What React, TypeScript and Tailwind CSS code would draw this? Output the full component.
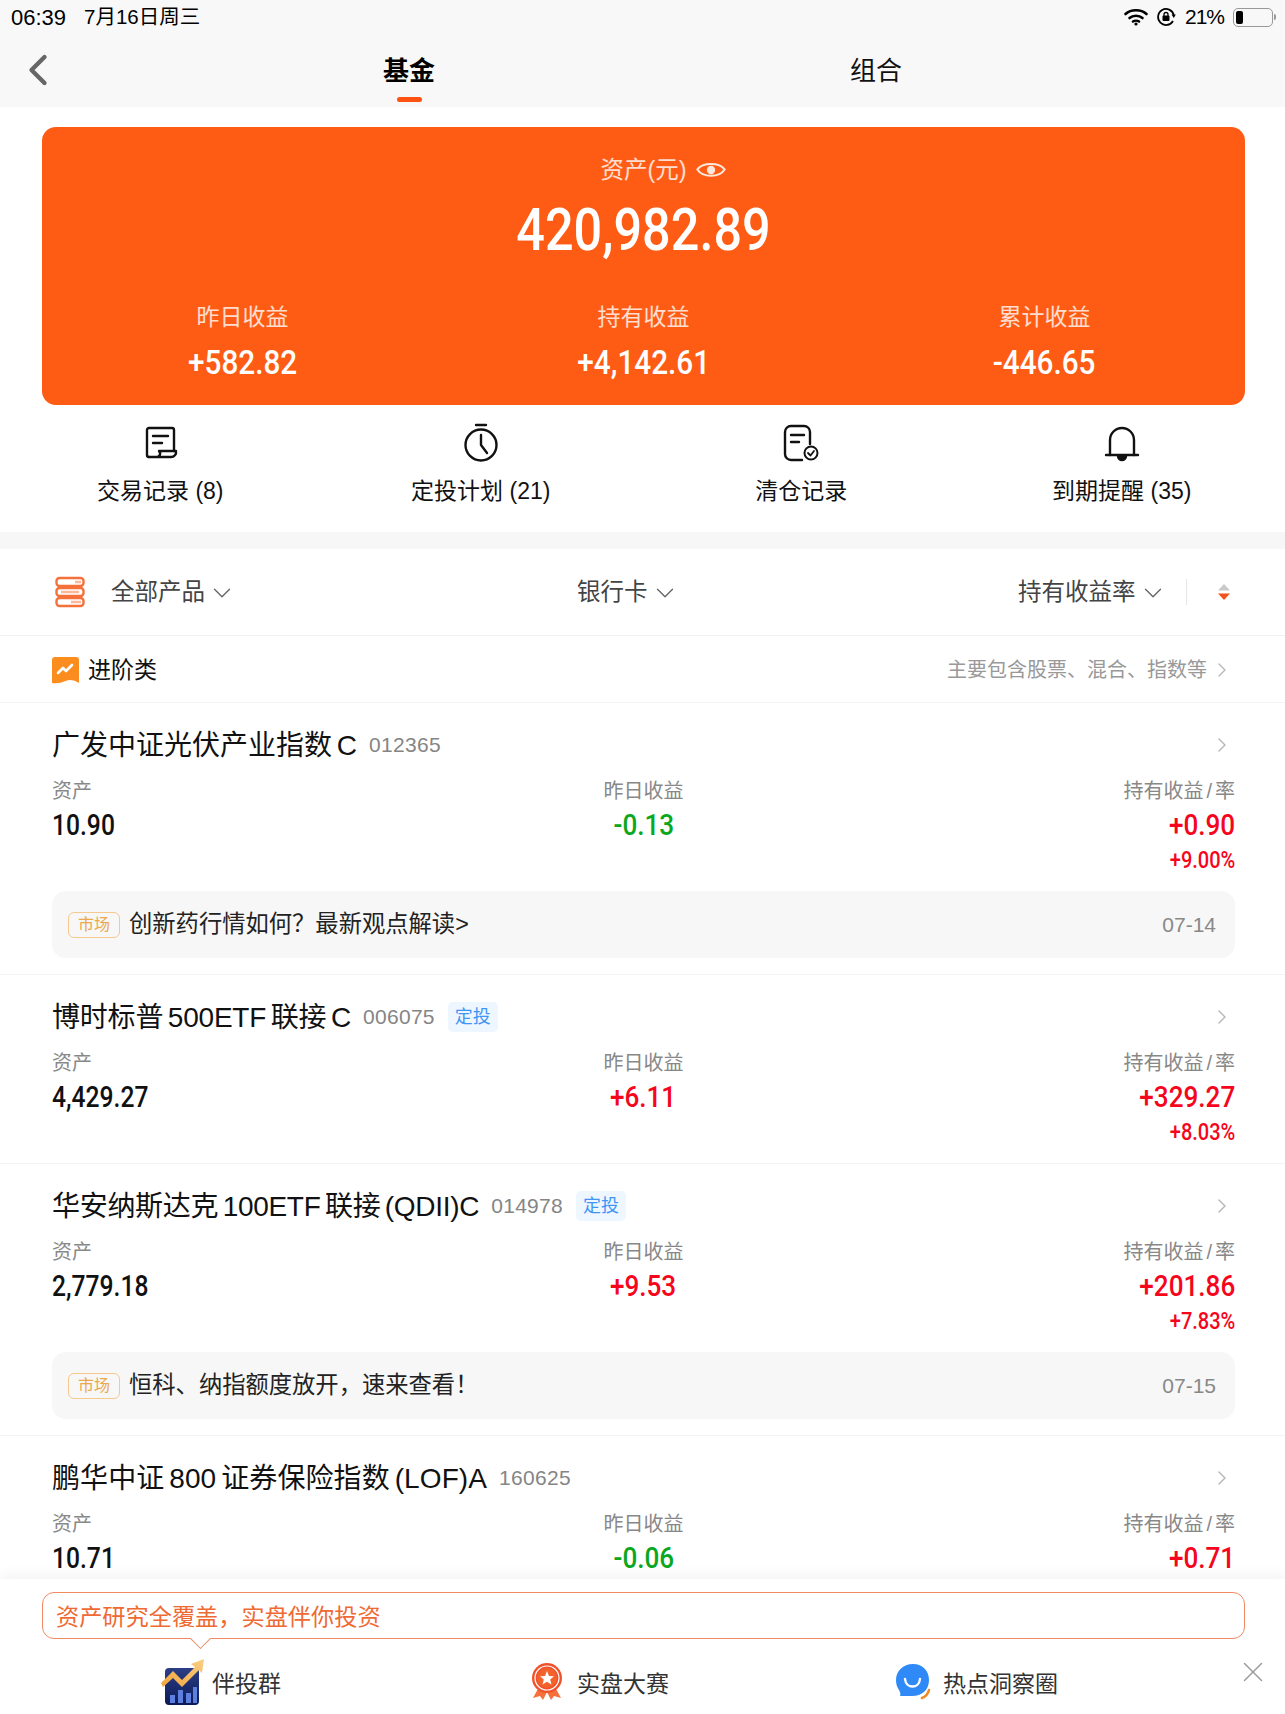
import React from "react";
import { ChevronDown, ChevronLeft, ChevronRight, X } from "lucide-react";

const numFont = "inline-block font-['Roboto',sans-serif] font-medium";

function DocIcon() {
  return (
    <svg width="38" height="38" viewBox="0 0 38 38" fill="none" stroke="#111" strokeWidth="2.4" strokeLinecap="round" strokeLinejoin="round">
      <path d="M8 33 a2 2 0 0 1-2-2 V6 a2 2 0 0 1 2-2 H31 a2 2 0 0 1 2 2 V27" />
      <path d="M8 33 H30 a5 5 0 0 0 5-6 H18 a3.500 3.500 0 0 1-3 6" />
      <path d="M12 12 H27 M12 19 H21" />
    </svg>
  );
}
function TimerIcon() {
  return (
    <svg width="38" height="42" viewBox="0 0 38 42" fill="none" stroke="#111" strokeWidth="2.4" strokeLinecap="round" strokeLinejoin="round">
      <path d="M14 3 H24" />
      <circle cx="19" cy="23" r="15.500" />
      <path d="M19 13 V23 L25 31" />
    </svg>
  );
}
function ClearIcon() {
  return (
    <svg width="38" height="38" viewBox="0 0 38 38" fill="none" stroke="#111" strokeWidth="2.4" strokeLinecap="round" strokeLinejoin="round">
      <path d="M20 36 H9 a6 6 0 0 1-6-6 V8 a6 6 0 0 1 6-6 H22 a6 6 0 0 1 6 6 V20" />
      <path d="M9 11 H22 M9 18 H17" />
      <circle cx="29" cy="29" r="6.500" strokeWidth="2" />
      <path d="M26 29 L28.500 31.500 L32 27" strokeWidth="1.800" />
    </svg>
  );
}
function BellIcon() {
  return (
    <svg width="38" height="38" viewBox="0 0 38 38" fill="none" stroke="#111" strokeWidth="2.4" strokeLinecap="round" strokeLinejoin="round">
      <path d="M3 31 H35" />
      <path d="M7 31 V16 a12 12 0 0 1 24 0 V31" />
      <path d="M15 32 a4 4 0 0 0 8 0 Z" fill="#111" />
    </svg>
  );
}
function Eye() {
  return (
    <svg width="32" height="23" viewBox="0 0 30 22" fill="none" stroke="#fff" strokeOpacity="0.85" strokeWidth="2" strokeLinecap="round">
      <path d="M2 10 C7 3 23 3 28 10 C23 18 7 18 2 10 Z" />
      <circle cx="15" cy="10.500" r="4" fill="#fff" fillOpacity="0.85" stroke="none" />
    </svg>
  );
}
function StackIcon() {
  return (
    <svg width="30" height="32" viewBox="0 0 30 32" fill="none" stroke="#f5703a" strokeWidth="2.4">
      <rect x="1.500" y="2" width="27" height="8" rx="3" />
      <rect x="1.500" y="12" width="27" height="8" rx="3" />
      <rect x="1.500" y="22" width="27" height="8" rx="3" />
      <path d="M20 6 H26 M6 16 H24 M16 26 H26" stroke="#fbb99b" />
    </svg>
  );
}
function SortIcon() {
  return (
    <svg width="12" height="16" viewBox="0 0 12 16">
      <path d="M6 0 L12 6.500 H0 Z" fill="#c9c9c9" />
      <path d="M6 16 L12 9.500 H0 Z" fill="#f4511e" />
    </svg>
  );
}
function AdvIcon() {
  return (
    <svg width="27" height="27" viewBox="0 0 27 27">
      <path d="M3 0 H24 a3 3 0 0 1 3 3 V26 Q20 21 13.500 24 Q7 27 0 26 V3 a3 3 0 0 1 3-3 Z" fill="#fb8c1e" />
      <path d="M6 16 L11 11 L14 14 L20 8" fill="none" stroke="#fff" strokeWidth="2.600" strokeLinecap="round" strokeLinejoin="round" />
    </svg>
  );
}
function WifiIcon() {
  return (
    <svg width="24" height="18" viewBox="0 0 24 18" fill="none" stroke="#000" strokeWidth="2.600" strokeLinecap="round">
      <path d="M1.500 6 C7 1 17 1 22.500 6" />
      <path d="M5.500 10 C9 7 15 7 18.500 10" />
      <path d="M9 13.500 C10.500 12.500 13.500 12.500 15 13.500" />
      <circle cx="12" cy="16" r="1.600" fill="#000" stroke="none" />
    </svg>
  );
}
function LockIcon() {
  return (
    <svg width="20" height="20" viewBox="0 0 20 20" fill="none" stroke="#000" strokeWidth="1.700">
      <path d="M17 14 A8 8 0 1 1 17.800 8" />
      <path d="M15.500 7.500 L19.800 7.500 L17.800 11 Z" fill="#000" stroke="none" />
      <rect x="6.500" y="8.500" width="7" height="5.500" rx="1" fill="#000" stroke="none" />
      <path d="M8 9 V7.500 a2 2 0 0 1 4 0 V9" strokeWidth="1.300" />
    </svg>
  );
}
function Battery() {
  return (
    <div className="flex items-center">
      <div className="w-[40px] h-[19px] rounded-[5px] border border-[#999] p-[2px] flex">
        <div className="w-[7px] h-full rounded-[2px] bg-black" />
      </div>
      <div className="w-[2px] h-[6px] rounded-r-full bg-[#999] ml-[1px]" />
    </div>
  );
}
function TeamIcon() {
  return (
    <svg width="44" height="46" viewBox="0 0 44 46">
      <defs>
        <linearGradient id="tg" x1="0" y1="0" x2="0" y2="1">
          <stop offset="0" stopColor="#2c3f86" />
          <stop offset="1" stopColor="#0c1a55" />
        </linearGradient>
        <linearGradient id="ta" x1="0" y1="1" x2="1" y2="0">
          <stop offset="0" stopColor="#f3a53a" />
          <stop offset="1" stopColor="#f8cf84" />
        </linearGradient>
      </defs>
      <rect x="5" y="9" width="34" height="37" rx="4" fill="url(#tg)" />
      <path d="M10 36 h5 v8 h-5 Z M18 31 h5 v13 h-5 Z M26 34 h5 v10 h-5 Z M33 28 h4 v16 h-4 Z" fill="#5c7fe0" />
      <path d="M1 24 L13 12 L22 21 L35 8 L31 5 L44 0 L42 14 L39 11 L22 28 L13 19 L3 28 Z" fill="url(#ta)" />
    </svg>
  );
}
function MedalIcon() {
  return (
    <svg width="34" height="38" viewBox="0 0 34 38">
      <path d="M9 24 L3 35 L10 33 L13 37 L17 29 L21 37 L24 33 L31 35 L25 24 Z" fill="#f5703a" />
      <circle cx="17" cy="15" r="15" fill="#f0512a" />
      <circle cx="17" cy="15" r="12" fill="none" stroke="#fff" strokeWidth="1.200" />
      <circle cx="17" cy="15" r="10" fill="#f4622c" />
      <path d="M17 8 L19 13 L24 13.300 L20.200 16.500 L21.500 21.500 L17 18.700 L12.500 21.500 L13.800 16.500 L10 13.300 L15 13 Z" fill="#fff" />
    </svg>
  );
}
function BubbleIcon() {
  return (
    <svg width="36" height="36" viewBox="0 0 36 36">
      <path d="M17 0 C27 0 33 7 33 16 C33 26 26 32 16 32 L4 32 C5 30 4 28 3 26 C1 23 0 20 0 16 C0 7 7 0 17 0 Z" fill="#2f8af8" />
      <path d="M9 15 C10 25 23 25 24 15" fill="none" stroke="#fff" strokeWidth="2.400" strokeLinecap="round" />
      <path d="M26 34 C29 33 32 30 33 26" fill="none" stroke="#f08a24" strokeWidth="2.600" strokeLinecap="round" />
    </svg>
  );
}

type Fund = {
  name: string;
  nameCls: string;
  code: string;
  plan?: boolean;
  asset: string;
  yest: string;
  hold: string;
  rate?: string;
  news?: { text: string; date: string };
};

const funds: Fund[] = [
  { name: "广发中证光伏产业指数 C", nameCls: "", code: "012365", asset: "10.90", yest: "-0.13", hold: "+0.90", rate: "+9.00%", news: { text: "创新药行情如何？最新观点解读>", date: "07-14" } },
  { name: "博时标普 500ETF 联接 C", nameCls: "tracking-[-0.2px]", code: "006075", plan: true, asset: "4,429.27", yest: "+6.11", hold: "+329.27", rate: "+8.03%" },
  { name: "华安纳斯达克 100ETF 联接 (QDII)C", nameCls: "tracking-[-0.3px]", code: "014978", plan: true, asset: "2,779.18", yest: "+9.53", hold: "+201.86", rate: "+7.83%", news: { text: "恒科、纳指额度放开，速来查看！", date: "07-15" } },
  { name: "鹏华中证 800 证券保险指数 (LOF)A", nameCls: "tracking-[0.1px]", code: "160625", asset: "10.71", yest: "-0.06", hold: "+0.71" },
];

function tone(v: string) {
  return v.startsWith("-") ? "text-[#0aa81e]" : "text-[#f5061d]";
}

function FundCard({ f }: { f: Fund }) {
  return (
    <div className="border-b border-[#f4f4f4] pl-[52px] pr-[50px] pt-[22px]">
      <div className="h-[40px] flex items-center">
        <span className={`text-[28px] leading-[40px] text-[#111] [word-spacing:-3px] pt-[2px] ${f.nameCls}`}>{f.name}</span>
        <span className="ml-[12px] text-[21px] tracking-[0.3px] text-[#858585]">{f.code}</span>
        {f.plan && <span className="ml-[13px] w-[50px] h-[30px] rounded-[5px] bg-[#eef6ff] text-[#3f95f4] text-[18px] flex items-center justify-center">定投</span>}
        <ChevronRight className="ml-auto mr-[1px] text-[#b5b5b5]" size={24} strokeWidth={1.4} />
      </div>
      <div className="grid grid-cols-3 mt-[10px]">
        <div>
          <div className="h-[30px] leading-[32px] text-[20px] text-[#888]">资产</div>
          <div className="h-[40px] leading-[40px]">
            <span className={`${numFont} text-[29px] text-[#111] scale-x-[0.85] origin-left`}>{f.asset}</span>
          </div>
        </div>
        <div className="text-center">
          <div className="h-[30px] leading-[32px] text-[20px] text-[#888]">昨日收益</div>
          <div className="h-[40px] leading-[40px]">
            <span className={`${numFont} text-[30px] scale-x-[0.87] origin-center ${tone(f.yest)}`}>{f.yest}</span>
          </div>
        </div>
        <div className="text-right">
          <div className="h-[30px] leading-[32px] text-[20px] text-[#888]">持有收益<span className="mx-[3px]">/</span>率</div>
          <div className="h-[40px] leading-[40px]">
            <span className={`${numFont} text-[30px] scale-x-[0.87] origin-right ${tone(f.hold)}`}>{f.hold}</span>
          </div>
          {f.rate && (
            <div className="h-[30px] leading-[32px]">
              <span className={`${numFont} text-[23px] scale-x-[0.87] origin-right ${tone(f.rate)}`}>{f.rate}</span>
            </div>
          )}
        </div>
      </div>
      <div className="h-[16px]" />
      {f.news && (
        <div className="h-[67px] mb-[16px] rounded-[14px] bg-[#f7f7f7] pl-[16px] pr-[19px] flex items-center">
          <span className="w-[52px] h-[26px] rounded-[6px] border border-[#f6c98d] text-[#eba84e] text-[16px] flex items-center justify-center">市场</span>
          <span className="ml-[9px] text-[23.300px] text-[#222]">{f.news.text}</span>
          <span className="ml-auto text-[21px] text-[#888]">{f.news.date}</span>
        </div>
      )}
    </div>
  );
}

function Filter({ label, className }: { label: string; className: string }) {
  return (
    <div className={`flex items-center pt-[2px] ${className}`}>
      <span className="text-[23.500px] text-[#444]">{label}</span>
      <ChevronDown className="ml-[2px] text-[#666]" size={30} strokeWidth={1.1} />
    </div>
  );
}

export default function App() {
  return (
    <div className="relative w-[1285px] h-[1714px] overflow-hidden bg-white font-['Liberation_Sans','Noto_Sans_CJK_SC',sans-serif]">
      <div className="bg-[#f8f8f8] h-[107px]">
        <div className="h-[34px] pl-[11px] pr-[9px] flex items-center text-black">
          <span className="text-[22px]">06:39</span>
          <span className="ml-[18px] text-[20.500px]">7月16日周三</span>
          <div className="ml-auto flex items-center gap-[8px]">
            <WifiIcon />
            <span className="mr-[1px] flex"><LockIcon /></span>
            <span className="text-[21px] tracking-[-1px] mr-[1px]">21%</span>
            <Battery />
          </div>
        </div>
        <div className="relative h-[73px] flex">
          <ChevronLeft className="absolute left-[12px] top-[10px] text-[#666]" size={52} strokeWidth={2} />
          <div className="absolute left-[383px] top-0 w-[52px] flex flex-col items-center">
            <span className="text-[26px] leading-[74px] h-[64px] font-bold text-black">基金</span>
          </div>
          <div className="absolute left-[397px] top-[63px] w-[25px] h-[5px] rounded-full bg-[#fe5212]" />
          <div className="absolute left-[850px] top-0 text-[26px] leading-[74px] text-[#111]">组合</div>
        </div>
      </div>

      <div className="ml-[42px] mr-[40px] mt-[20px] h-[278px] rounded-[14px] bg-[#fe5c14] text-white">
        <div className="h-[86px] pt-[26px] pl-[40px] flex items-start justify-center">
          <span className="text-[23.500px] leading-[34px] text-white/80">资产(元)</span>
          <span className="ml-[8px] mt-[6px]"><Eye /></span>
        </div>
        <div className="h-[58px] leading-[58px] -mt-[12px] text-center">
          <span className={`${numFont} text-[60px] scale-x-[0.84] origin-center`}>420,982.89</span>
        </div>
        <div className="grid grid-cols-3 mt-[41px] text-center">
          {[["昨日收益", "+582.82"], ["持有收益", "+4,142.61"], ["累计收益", "-446.65"]].map(([a, b]) => (
            <div key={a}>
              <div className="text-[23px] leading-[34px] text-white/80">{a}</div>
              <div className="leading-[58px]">
                <span className={`${numFont} text-[33px] scale-x-[0.9] origin-center`}>{b}</span>
              </div>
            </div>
          ))}
        </div>
      </div>

      <div className="grid grid-cols-4 h-[127px] pt-[17px] pr-[3px]">
        {[
          [<DocIcon key="a" />, "交易记录 (8)"],
          [<TimerIcon key="b" />, "定投计划 (21)"],
          [<ClearIcon key="c" />, "清仓记录"],
          [<BellIcon key="d" />, "到期提醒 (35)"],
        ].map(([icon, label], i) => (
          <div key={i} className="flex flex-col items-center">
            <div className="h-[42px] flex items-center">{icon}</div>
            <div className="mt-[11px] text-[23px] leading-[32px] text-[#111]">{label}</div>
          </div>
        ))}
      </div>

      <div className="h-[17px] bg-[#f7f7f7]" />

      <div className="h-[87px] flex items-center border-b border-[#f0f0f0] pl-[55px]">
        <StackIcon />
        <Filter label="全部产品" className="ml-[26px] w-[466px]" />
        <Filter label="银行卡" className="w-[441px]" />
        <Filter label="持有收益率" className="" />
        <div className="ml-[18px] w-px h-[26px] bg-[#e6e6e6]" />
        <span className="ml-[31px] flex"><SortIcon /></span>
      </div>

      <div className="h-[67px] flex items-center border-b border-[#f4f4f4] pl-[52px] pr-[51px] pt-[2px]">
        <AdvIcon />
        <span className="ml-[9px] text-[23px] text-[#111]">进阶类</span>
        <span className="ml-auto text-[20px] text-[#999]">主要包含股票、混合、指数等</span>
        <ChevronRight className="ml-[3px] text-[#b5b5b5]" size={24} strokeWidth={1.3} />
      </div>

      {funds.map((f) => (
        <FundCard key={f.code} f={f} />
      ))}

      <div className="absolute left-0 right-0 bottom-0 h-[135px] bg-white shadow-[0_-6px_10px_rgba(0,0,0,0.04)]">
        <div className="relative ml-[42px] mr-[40px] mt-[13px] h-[47px] rounded-[12px] border border-[#f08a62] pl-[13px] pt-[3px] flex items-center text-[23.200px] text-[#ef6a33]">
          资产研究全覆盖，实盘伴你投资
          <div className="absolute left-[150px] -bottom-[8px] w-[15px] h-[15px] rotate-45 bg-white border-r border-b border-[#f08a62]" />
        </div>
        <div className="mt-[20px] flex items-center pl-[160px]">
          <div className="w-[370px] flex items-center">
            <TeamIcon />
            <span className="ml-[8px] pt-[4px] text-[23px] text-[#333]">伴投群</span>
          </div>
          <div className="w-[366px] flex items-center">
            <MedalIcon />
            <span className="ml-[13px] pt-[4px] text-[23px] text-[#333]">实盘大赛</span>
          </div>
          <div className="flex items-center">
            <BubbleIcon />
            <span className="ml-[11px] pt-[4px] text-[23px] text-[#333]">热点洞察圈</span>
          </div>
        </div>
        <X className="absolute right-[15px] top-[76px] text-[#999]" size={34} strokeWidth={1} />
      </div>
    </div>
  );
}
